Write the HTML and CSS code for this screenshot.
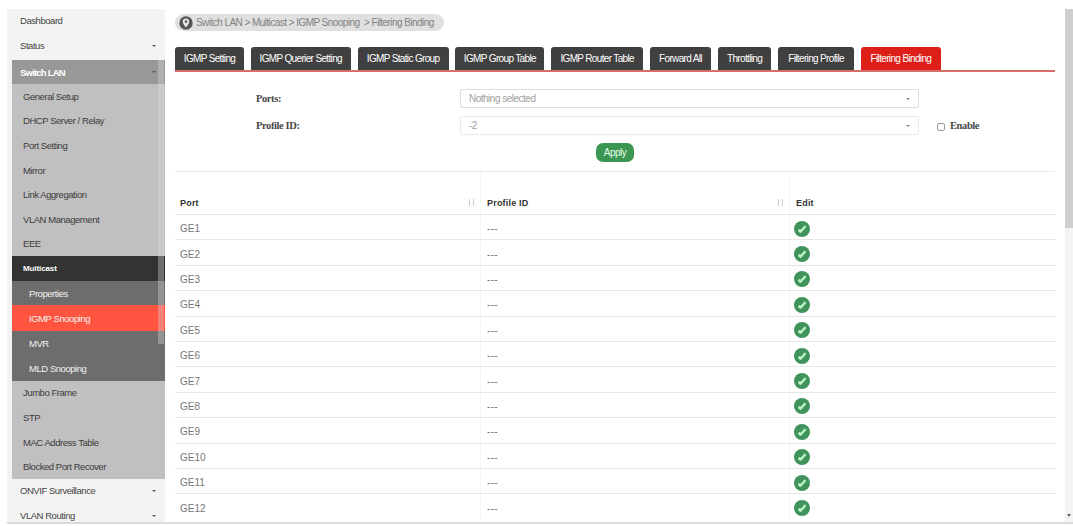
FILE: index.html
```html
<!DOCTYPE html>
<html>
  <head>
    <meta charset="UTF-8" />
    <title>Filtering Binding</title>
    <link rel="stylesheet" href="styles.css">
  </head>
  <body>
    <svg class="defs">
      <symbol id="edit-icon" viewBox="0 0 16 16">
        <circle cx="8" cy="8" r="8" fill="#3f935b" />
        <path d="M3.900 9.200 5.300 7.900 6.900 8.600 10.700 4.300 12.400 5.900 8.300 10.600 6.800 11.900 4.800 11.200Z" fill="#b9f2c4" />
      </symbol>
    </svg>

    <div class="window">
      <nav class="sidebar">
        <a class="top">Dashboard</a>
        <a class="top has-arrow">Status</a>
        <a class="open has-arrow">Switch LAN</a>
        <div class="submenu">
          <a>General Setup</a>
          <a>DHCP Server / Relay</a>
          <a>Port Setting</a>
          <a>Mirror</a>
          <a>Link Aggregation</a>
          <a>VLAN Management</a>
          <a>EEE</a>
        </div>
        <a class="current">Multicast</a>
        <div class="submenu2">
          <a>Properties</a>
          <a class="active">IGMP Snooping</a>
          <a>MVR</a>
          <a>MLD Snooping</a>
        </div>
        <div class="submenu">
          <a>Jumbo Frame</a>
          <a>STP</a>
          <a>MAC Address Table</a>
          <a>Blocked Port Recover</a>
        </div>
        <a class="top has-arrow">ONVIF Surveillance</a>
        <a class="top has-arrow">VLAN Routing</a>
        <div class="menu-scroll"></div>
      </nav>

      <main>
        <div class="breadcrumb">
          <svg class="crumb-icon" viewBox="0 0 14 14">
            <circle cx="7" cy="7" r="6.700" fill="#555" />
            <path d="M7 2.600a3.200 3.200 0 0 1 3.200 3.200C10.200 8 7 11.500 7 11.500S3.800 8 3.800 5.800A3.200 3.200 0 0 1 7 2.600Z" fill="#e8e8e8" />
            <circle cx="7" cy="5.600" r="1.300" fill="#555" />
          </svg>
          <span>Switch LAN &gt; Multicast &gt; IGMP Snooping &nbsp;&gt; Filtering Binding</span>
        </div>

        <div class="tabs">
          <a>IGMP Setting</a>
          <a>IGMP Querier Setting</a>
          <a>IGMP Static Group</a>
          <a>IGMP Group Table</a>
          <a>IGMP Router Table</a>
          <a>Forward All</a>
          <a>Throttling</a>
          <a>Filtering Profile</a>
          <a class="selected">Filtering Binding</a>
        </div>

        <form>
          <div class="field">
            <label>Ports:</label>
            <div class="select">Nothing selected</div>
          </div>
          <div class="field profile">
            <label>Profile ID:</label>
            <div class="select">-2</div>
            <span class="check"></span>
            <span class="enable">Enable</span>
          </div>
          <button type="button">Apply</button>
        </form>

        <div class="table">
          <div class="row head">
            <div>Port<i class="sort"></i></div>
            <div>Profile ID<i class="sort"></i></div>
            <div>Edit</div>
          </div>
        </div>
      </main>

      <div class="page-scroll">
        <div class="thumb"></div>
        <div class="down"></div>
      </div>
    </div>

    <script>
      const table = document.querySelector(".table");
      for (let i = 1; i <= 12; i++) {
        table.insertAdjacentHTML(
          "beforeend",
          `<div class="row">
            <div>GE${i}</div>
            <div class="dash">---</div>
            <div><svg class="edit"><use href="#edit-icon" /></svg></div>
          </div>`
        );
      }
    </script>
  </body>
</html>
```
FILE: styles.css
```css
* {
  box-sizing: border-box;
}
body {
  margin: 0;
  height: 526px;
  padding-top: 9px;
  overflow: hidden;
  background-color: white;
  font-family: "Liberation Sans", Arial, sans-serif;
  font-size: 10px;
  color: #444;
}
.defs {
  position: absolute;
  width: 0;
  height: 0;
}
.window {
  display: flex;
  height: 515px;
  margin-left: 7px;
  border-bottom: 2px solid #d9dcde;
}

.sidebar {
  position: relative;
  width: 158px;
  padding-left: 5px;
  overflow: hidden;
  background-color: #f3f3f3;
  font-size: 9.5px;
  letter-spacing: -0.45px;
}
.sidebar a {
  display: flex;
  align-items: center;
  height: 24.6px;
  padding-left: 11px;
  white-space: nowrap;
}
.sidebar .top {
  height: 25px;
  padding-left: 8px;
  padding-bottom: 1px;
}
.sidebar .top:first-child {
  height: 26px;
  padding-bottom: 3px;
}
.sidebar .top:nth-child(2) {
  padding-bottom: 4px;
}
.has-arrow::after {
  content: "";
  margin-left: auto;
  margin-right: 9px;
  border: 2px solid transparent;
  border-top-color: #555;
  border-bottom: 0;
}
.sidebar .open {
  height: 24px;
  padding-left: 8px;
  background-color: #989898;
  color: white;
  font-weight: bold;
  letter-spacing: -0.8px;
}
.submenu {
  background-color: #c0c0c0;
}
.submenu a {
  color: #3c3c3c;
}
.sidebar .current {
  background-color: #333;
  color: white;
  font-size: 8px;
  font-weight: bold;
  letter-spacing: -0.1px;
}
.submenu2 {
  background-color: #6d6d6d;
}
.submenu2 a {
  padding-left: 17px;
  color: #f2f2f2;
}
.submenu2 .active {
  height: 26px;
  background-color: #ff5440;
}
.menu-scroll {
  position: absolute;
  top: 51px;
  right: 1px;
  width: 6px;
  height: 284px;
  background-color: rgba(220, 220, 220, 0.35);
}

main {
  width: 890px;
  padding: 5px 0 0 10px;
}
.breadcrumb {
  display: flex;
  align-items: center;
  width: 269px;
  height: 17px;
  padding-left: 4px;
  border-radius: 9px;
  background-color: #e0e0e0;
  color: #808080;
  letter-spacing: -0.55px;
  white-space: nowrap;
}
.crumb-icon {
  width: 14px;
  height: 14px;
  margin-right: 3px;
}

.tabs {
  display: grid;
  grid-template-columns: 69px 100px 91px 89px 92px 61px 53.5px 76px 80px;
  column-gap: 6.8px;
  margin-top: 16px;
  border-bottom: 2px solid #d66e68;
}
.tabs a {
  display: flex;
  align-items: center;
  justify-content: center;
  height: 23px;
  border-radius: 3px 3px 0 0;
  background-color: #404040;
  color: white;
  letter-spacing: -0.65px;
  white-space: nowrap;
}
.tabs .selected {
  background-color: #dc2019;
}

form {
  height: 100px;
  padding-top: 17px;
  border-bottom: 1px solid #ececec;
}
.field {
  display: flex;
  align-items: center;
  height: 19px;
  margin-bottom: 8px;
  padding-left: 81px;
}
.field label {
  width: 204px;
}
label,
.enable {
  font-family: "Liberation Serif", "Times New Roman", serif;
  font-size: 10.5px;
  font-weight: bold;
  letter-spacing: -0.4px;
  color: #484848;
}
.select {
  display: flex;
  align-items: center;
  width: 459px;
  height: 19px;
  padding-left: 8px;
  border: 1px solid #ddd;
  border-radius: 2px;
  color: #a0a0a0;
  letter-spacing: -0.5px;
}
.profile .select {
  border-color: #eaeaea;
}
.select::after {
  content: "";
  margin-left: auto;
  margin-right: 8px;
  border: 2px solid transparent;
  border-top-color: #888;
  border-bottom: 0;
}
.check {
  width: 8px;
  height: 8px;
  margin: 2px 5px 0 18px;
  border: 1px solid #999;
  border-radius: 2px;
}
button {
  display: block;
  width: 38px;
  height: 19px;
  margin-left: 421px;
  padding: 0;
  border: none;
  border-radius: 7px;
  background-color: #3b9652;
  color: #e4ffe8;
  font-family: inherit;
  font-size: 10px;
  letter-spacing: -0.5px;
}

.row {
  display: grid;
  grid-template-columns: 305px 309px 266px;
  height: 25.4px;
  border-bottom: 1px solid #e6e6e6;
  color: #777;
}
.row:last-child {
  border-bottom: none;
}
.row > div {
  display: flex;
  align-items: center;
  padding-top: 3px;
  padding-left: 5px;
}
.row > div + div {
  border-left: 1px solid #f6f6f6;
}
.row .dash {
  padding-left: 6px;
  letter-spacing: 0.3px;
}
.row.head {
  height: 43px;
  color: #333;
  font-size: 9px;
  font-weight: bold;
  letter-spacing: 0.2px;
}
.head > div {
  padding-top: 19px;
}
.head > div + div {
  padding-left: 6px;
}
.sort {
  width: 5px;
  height: 7px;
  margin-left: auto;
  margin-right: 6px;
  border: 1px solid #ccc;
  border-width: 0 1px;
}
.edit {
  width: 16px;
  height: 16px;
  margin-left: -1px;
}

.page-scroll {
  display: flex;
  flex-direction: column;
  align-items: center;
  justify-content: space-between;
  width: 8px;
  margin-left: auto;
  background-color: #f4f4f4;
}
.thumb {
  width: 8px;
  height: 219px;
  background-color: #cfcfcf;
}
.down {
  margin-bottom: 5px;
  border: 2px solid transparent;
  border-top: 3px solid #666;
  border-bottom: 0;
}
```
